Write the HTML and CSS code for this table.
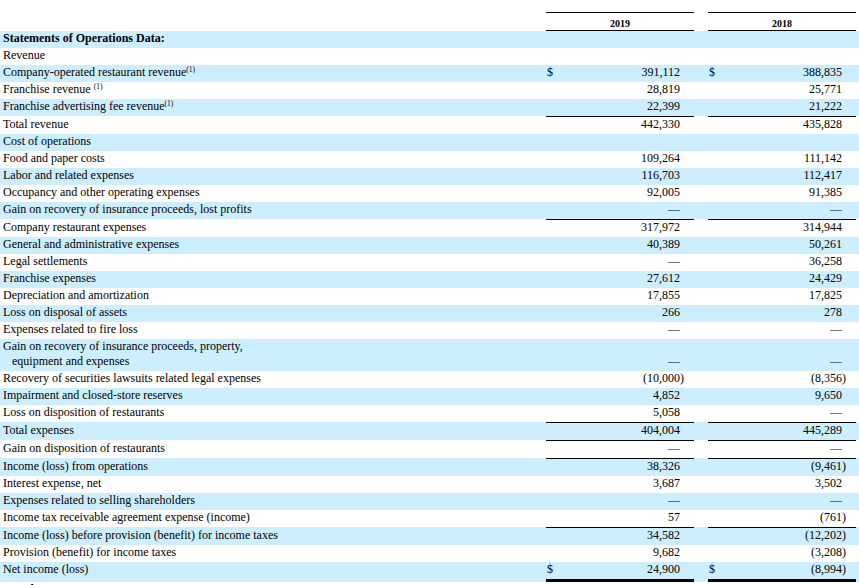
FILE: index.html
```html
<!DOCTYPE html>
<html lang="en">
<head>
<meta charset="utf-8">
<title>Statements of Operations Data</title>
<link rel="stylesheet" href="styles.css">
</head>
<body>
<div class="page">
<table class="fin">
  <colgroup>
    <col class="c-lbl"><col class="c-sp">
    <col class="c-cur"><col class="c-num"><col class="c-par">
    <col class="c-gap">
    <col class="c-cur"><col class="c-num"><col class="c-par">
    <col class="c-end">
  </colgroup>
  <thead>
    <tr>
      <th></th><th></th>
      <th class="yr" colspan="3">2019</th>
      <th></th>
      <th class="yr" colspan="3">2018</th>
      <th></th>
    </tr>
  </thead>
  <tbody>
    <tr><td class="lbl"><b>Statements of Operations Data:</b></td><td></td><td class="cur"></td><td class="num"></td><td class="par"></td><td></td><td class="cur"></td><td class="num"></td><td class="par"></td><td></td></tr>
    <tr><td class="lbl">Revenue</td><td></td><td class="cur"></td><td class="num"></td><td class="par"></td><td></td><td class="cur"></td><td class="num"></td><td class="par"></td><td></td></tr>
    <tr><td class="lbl">Company-operated restaurant revenue<sup class="fn">(1)</sup></td><td></td><td class="cur">$</td><td class="num">391,112</td><td class="par"></td><td></td><td class="cur">$</td><td class="num">388,835</td><td class="par"></td><td></td></tr>
    <tr><td class="lbl">Franchise revenue <sup class="fn">(1)</sup></td><td></td><td class="cur"></td><td class="num">28,819</td><td class="par"></td><td></td><td class="cur"></td><td class="num">25,771</td><td class="par"></td><td></td></tr>
    <tr><td class="lbl">Franchise advertising fee revenue<sup class="fn">(1)</sup></td><td></td><td class="cur"></td><td class="num">22,399</td><td class="par"></td><td></td><td class="cur"></td><td class="num">21,222</td><td class="par"></td><td></td></tr>
    <tr class="tt"><td class="lbl">Total revenue</td><td></td><td class="cur"></td><td class="num">442,330</td><td class="par"></td><td></td><td class="cur"></td><td class="num">435,828</td><td class="par"></td><td></td></tr>
    <tr><td class="lbl">Cost of operations</td><td></td><td class="cur"></td><td class="num"></td><td class="par"></td><td></td><td class="cur"></td><td class="num"></td><td class="par"></td><td></td></tr>
    <tr><td class="lbl">Food and paper costs</td><td></td><td class="cur"></td><td class="num">109,264</td><td class="par"></td><td></td><td class="cur"></td><td class="num">111,142</td><td class="par"></td><td></td></tr>
    <tr><td class="lbl">Labor and related expenses</td><td></td><td class="cur"></td><td class="num">116,703</td><td class="par"></td><td></td><td class="cur"></td><td class="num">112,417</td><td class="par"></td><td></td></tr>
    <tr><td class="lbl">Occupancy and other operating expenses</td><td></td><td class="cur"></td><td class="num">92,005</td><td class="par"></td><td></td><td class="cur"></td><td class="num">91,385</td><td class="par"></td><td></td></tr>
    <tr><td class="lbl">Gain on recovery of insurance proceeds, lost profits</td><td></td><td class="cur"></td><td class="num">—</td><td class="par"></td><td></td><td class="cur"></td><td class="num">—</td><td class="par"></td><td></td></tr>
    <tr class="tt"><td class="lbl">Company restaurant expenses</td><td></td><td class="cur"></td><td class="num">317,972</td><td class="par"></td><td></td><td class="cur"></td><td class="num">314,944</td><td class="par"></td><td></td></tr>
    <tr><td class="lbl">General and administrative expenses</td><td></td><td class="cur"></td><td class="num">40,389</td><td class="par"></td><td></td><td class="cur"></td><td class="num">50,261</td><td class="par"></td><td></td></tr>
    <tr><td class="lbl">Legal settlements</td><td></td><td class="cur"></td><td class="num">—</td><td class="par"></td><td></td><td class="cur"></td><td class="num">36,258</td><td class="par"></td><td></td></tr>
    <tr><td class="lbl">Franchise expenses</td><td></td><td class="cur"></td><td class="num">27,612</td><td class="par"></td><td></td><td class="cur"></td><td class="num">24,429</td><td class="par"></td><td></td></tr>
    <tr><td class="lbl">Depreciation and amortization</td><td></td><td class="cur"></td><td class="num">17,855</td><td class="par"></td><td></td><td class="cur"></td><td class="num">17,825</td><td class="par"></td><td></td></tr>
    <tr><td class="lbl">Loss on disposal of assets</td><td></td><td class="cur"></td><td class="num">266</td><td class="par"></td><td></td><td class="cur"></td><td class="num">278</td><td class="par"></td><td></td></tr>
    <tr><td class="lbl">Expenses related to fire loss</td><td></td><td class="cur"></td><td class="num">—</td><td class="par"></td><td></td><td class="cur"></td><td class="num">—</td><td class="par"></td><td></td></tr>
    <tr class="two"><td class="lbl">Gain on recovery of insurance proceeds, property, equipment and expenses</td><td></td><td class="cur"></td><td class="num">—</td><td class="par"></td><td></td><td class="cur"></td><td class="num">—</td><td class="par"></td><td></td></tr>
    <tr><td class="lbl">Recovery of securities lawsuits related legal expenses</td><td></td><td class="cur"></td><td class="num">(10,000</td><td class="par">)</td><td></td><td class="cur"></td><td class="num">(8,356</td><td class="par">)</td><td></td></tr>
    <tr><td class="lbl">Impairment and closed-store reserves</td><td></td><td class="cur"></td><td class="num">4,852</td><td class="par"></td><td></td><td class="cur"></td><td class="num">9,650</td><td class="par"></td><td></td></tr>
    <tr><td class="lbl">Loss on disposition of restaurants</td><td></td><td class="cur"></td><td class="num">5,058</td><td class="par"></td><td></td><td class="cur"></td><td class="num">—</td><td class="par"></td><td></td></tr>
    <tr class="tt"><td class="lbl">Total expenses</td><td></td><td class="cur"></td><td class="num">404,004</td><td class="par"></td><td></td><td class="cur"></td><td class="num">445,289</td><td class="par"></td><td></td></tr>
    <tr class="tt"><td class="lbl">Gain on disposition of restaurants</td><td></td><td class="cur"></td><td class="num">—</td><td class="par"></td><td></td><td class="cur"></td><td class="num">—</td><td class="par"></td><td></td></tr>
    <tr class="tt"><td class="lbl">Income (loss) from operations</td><td></td><td class="cur"></td><td class="num">38,326</td><td class="par"></td><td></td><td class="cur"></td><td class="num">(9,461</td><td class="par">)</td><td></td></tr>
    <tr><td class="lbl">Interest expense, net</td><td></td><td class="cur"></td><td class="num">3,687</td><td class="par"></td><td></td><td class="cur"></td><td class="num">3,502</td><td class="par"></td><td></td></tr>
    <tr><td class="lbl">Expenses related to selling shareholders</td><td></td><td class="cur"></td><td class="num">—</td><td class="par"></td><td></td><td class="cur"></td><td class="num">—</td><td class="par"></td><td></td></tr>
    <tr><td class="lbl">Income tax receivable agreement expense (income)</td><td></td><td class="cur"></td><td class="num">57</td><td class="par"></td><td></td><td class="cur"></td><td class="num">(761</td><td class="par">)</td><td></td></tr>
    <tr class="tt"><td class="lbl">Income (loss) before provision (benefit) for income taxes</td><td></td><td class="cur"></td><td class="num">34,582</td><td class="par"></td><td></td><td class="cur"></td><td class="num">(12,202</td><td class="par">)</td><td></td></tr>
    <tr><td class="lbl">Provision (benefit) for income taxes</td><td></td><td class="cur"></td><td class="num">9,682</td><td class="par"></td><td></td><td class="cur"></td><td class="num">(3,208</td><td class="par">)</td><td></td></tr>
    <tr class="tb"><td class="lbl">Net income (loss)</td><td></td><td class="cur">$</td><td class="num">24,900</td><td class="par"></td><td></td><td class="cur">$</td><td class="num">(8,994</td><td class="par">)</td><td></td></tr>
    <tr><td class="lbl"><b>Per Share Data:</b></td><td></td><td class="cur"></td><td class="num"></td><td class="par"></td><td></td><td class="cur"></td><td class="num"></td><td class="par"></td><td></td></tr>
  </tbody>
</table>
</div>
</body>
</html>
```

FILE: styles.css
```css
html, body {
  margin: 0;
  padding: 0;
  background: #ffffff;
}

body {
  font-family: "Liberation Serif", "Times New Roman", serif;
  color: #000000;
}

.page {
  padding-top: 12px;
}

.fin {
  width: 100%;
  table-layout: fixed;
  border-collapse: separate;
  border-spacing: 0;
  font-size: 12px;
  line-height: 15px;
}

.c-lbl { width: 290px; }
.c-sp  { width: 256px; }
.c-cur { width: 14px; }
.c-num { width: 120px; }
.c-par { width: 14px; }
.c-gap { width: 14px; }
.c-end { width: 3px; }

.fin thead th {
  padding: 0;
  font-weight: bold;
}

.fin th.yr {
  border-top: 1px solid #000000;
  border-bottom: 1px solid #000000;
  font-size: 10px;
  line-height: 12px;
  padding: 5px 0 0;
  text-align: center;
  vertical-align: bottom;
}

.fin td {
  padding: 0 0 2px;
  vertical-align: baseline;
  white-space: nowrap;
}

.fin tbody tr:nth-child(odd) {
  background: #cceeff;
}

.fin td.lbl {
  padding-left: 12px;
  text-indent: -9px;
  white-space: normal;
}

.fin td.cur {
  padding-left: 1px;
  text-align: left;
}

.fin td.num {
  text-align: right;
}

.fin td.par {
  text-align: left;
}

.fin .two td.num,
.fin .two td.cur,
.fin .two td.par {
  vertical-align: bottom;
}

.fin tr.tt td.cur,
.fin tr.tt td.num,
.fin tr.tt td.par {
  border-top: 1px solid #000000;
}

.fin tr.tb td.cur,
.fin tr.tb td.num,
.fin tr.tb td.par {
  border-bottom: 3px solid #000000;
}

.fn {
  font-size: 7.5px;
  line-height: 0;
  vertical-align: 4px;
}
```
